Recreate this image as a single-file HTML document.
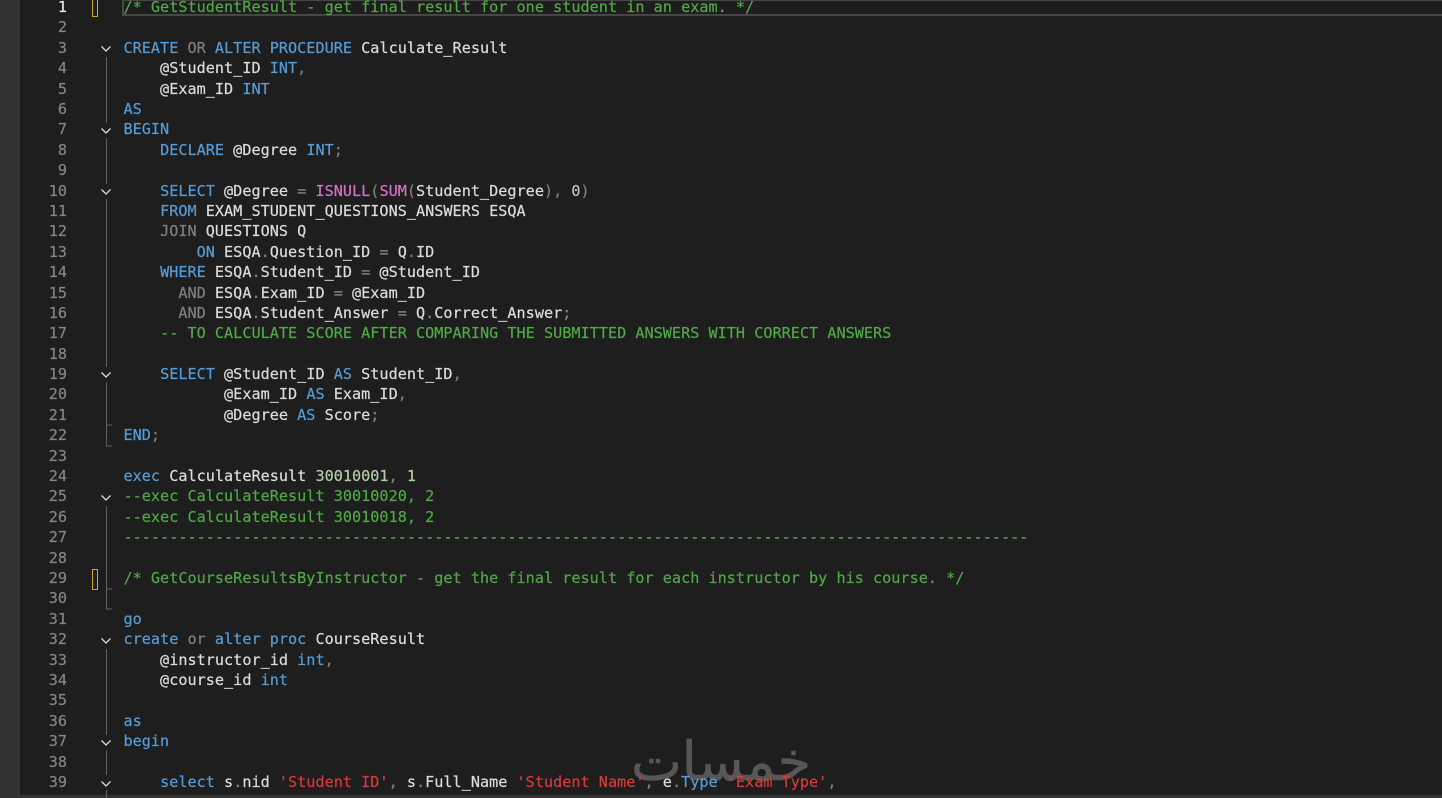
<!DOCTYPE html>
<html><head><meta charset="utf-8"><style>
html,body{margin:0;padding:0;background:#1e1e1e;width:1442px;height:798px;overflow:hidden}
#page{position:relative;width:1442px;height:798px;overflow:hidden;background:#1e1e1e}
#strip{position:absolute;left:0;top:0;width:20px;height:798px;background:#333}
#bottom{position:absolute;left:0;top:795px;width:1442px;height:3px;background:#333}
#cur{position:absolute;left:122px;top:-1px;width:1320px;height:13px;border:2px solid #464646;border-right:0;box-sizing:content-box}
pre{position:absolute;margin:0;font:15.15px/20.39px "DejaVu Sans Mono","Liberation Mono",monospace;white-space:pre;-webkit-text-stroke:.2px currentColor}
#nums{left:30px;top:-2.95px;width:37px;text-align:right;color:#858585}
#nums b{font-weight:normal;color:#e4e4e4}
#code{left:123.5px;top:-2.95px;color:#dcdcdc;letter-spacing:.025px}
.k{color:#569cd6}.g{color:#808080}.c{color:#50a846}.f{color:#d373c8}.s{color:#d13c3c}.n{color:#b5cea8}
.y{position:absolute;left:92px;width:4px;height:19px;border:1px solid #d0a828;box-sizing:content-box}
svg{position:absolute;left:0;top:0}
#wm{position:absolute;left:621px;top:727px;width:200px;height:70px;overflow:hidden;text-align:center;font:normal 54px/70px "DejaVu Sans",sans-serif;color:#575757;-webkit-text-stroke:.5px #575757;direction:rtl}
</style></head><body><div id="page">
<div id="strip"></div><div id="bottom"></div><div id="cur"></div>
<div class="y" style="top:-4px"></div><div class="y" style="top:569px"></div>
<div id="wm">خمسات</div>
<svg width="1442" height="798" fill="none" stroke-width="1">
<g stroke="#606060">
<path d="M106.5 57V123M106.5 138V184M106.5 199V367M106.5 382V446H112M106.5 425H112M106.5 506V609H112M106.5 589H112M106.5 649V735M106.5 750V775M106.5 790V798"/>
</g>
<g stroke="#dcdcdc" stroke-width="1.3">
<path d="M101.5 46.5L106 51L110.5 46.5M101.5 128.5L106 133L110.5 128.5M101.5 189.5L106 194L110.5 189.5M101.5 372.5L106 377L110.5 372.5M101.5 495.5L106 500L110.5 495.5M101.5 638.5L106 643L110.5 638.5M101.5 740.5L106 745L110.5 740.5M101.5 781.5L106 786L110.5 781.5"/>
</g>
</svg>
<pre id="nums"><b>1</b>
2
3
4
5
6
7
8
9
10
11
12
13
14
15
16
17
18
19
20
21
22
23
24
25
26
27
28
29
30
31
32
33
34
35
36
37
38
39</pre>
<pre id="code"><span class="c">/* GetStudentResult - get final result for one student in an exam. */</span>

<span class="k">CREATE</span> <span class="g">OR</span> <span class="k">ALTER PROCEDURE</span> Calculate_Result
    @Student_ID <span class="k">INT</span><span class="g">,</span>
    @Exam_ID <span class="k">INT</span>
<span class="k">AS</span>
<span class="k">BEGIN</span>
    <span class="k">DECLARE</span> @Degree <span class="k">INT</span><span class="g">;</span>

    <span class="k">SELECT</span> @Degree <span class="g">=</span> <span class="f">ISNULL</span><span class="g">(</span><span class="f">SUM</span><span class="g">(</span>Student_Degree<span class="g">),</span> <span class="n">0</span><span class="g">)</span>
    <span class="k">FROM</span> EXAM_STUDENT_QUESTIONS_ANSWERS ESQA
    <span class="g">JOIN</span> QUESTIONS Q
        <span class="k">ON</span> ESQA<span class="g">.</span>Question_ID <span class="g">=</span> Q<span class="g">.</span>ID
    <span class="k">WHERE</span> ESQA<span class="g">.</span>Student_ID <span class="g">=</span> @Student_ID
      <span class="g">AND</span> ESQA<span class="g">.</span>Exam_ID <span class="g">=</span> @Exam_ID
      <span class="g">AND</span> ESQA<span class="g">.</span>Student_Answer <span class="g">=</span> Q<span class="g">.</span>Correct_Answer<span class="g">;</span>
    <span class="c">-- TO CALCULATE SCORE AFTER COMPARING THE SUBMITTED ANSWERS WITH CORRECT ANSWERS</span>

    <span class="k">SELECT</span> @Student_ID <span class="k">AS</span> Student_ID<span class="g">,</span>
           @Exam_ID <span class="k">AS</span> Exam_ID<span class="g">,</span>
           @Degree <span class="k">AS</span> Score<span class="g">;</span>
<span class="k">END</span><span class="g">;</span>

<span class="k">exec</span> CalculateResult <span class="n">30010001</span><span class="g">,</span> <span class="n">1</span>
<span class="c">--exec CalculateResult 30010020, 2</span>
<span class="c">--exec CalculateResult 30010018, 2</span>
<span class="c">---------------------------------------------------------------------------------------------------</span>

<span class="c">/* GetCourseResultsByInstructor - get the final result for each instructor by his course. */</span>

<span class="k">go</span>
<span class="k">create</span> <span class="g">or</span> <span class="k">alter proc</span> CourseResult
    @instructor_id <span class="k">int</span><span class="g">,</span>
    @course_id <span class="k">int</span>

<span class="k">as</span>
<span class="k">begin</span>

    <span class="k">select</span> s<span class="g">.</span>nid <span class="s">'Student ID'</span><span class="g">,</span> s<span class="g">.</span>Full_Name <span class="s">'Student Name'</span><span class="g">,</span> e<span class="g">.</span><span class="k">Type</span> <span class="s">'Exam Type'</span><span class="g">,</span></pre>
</div></body></html>
